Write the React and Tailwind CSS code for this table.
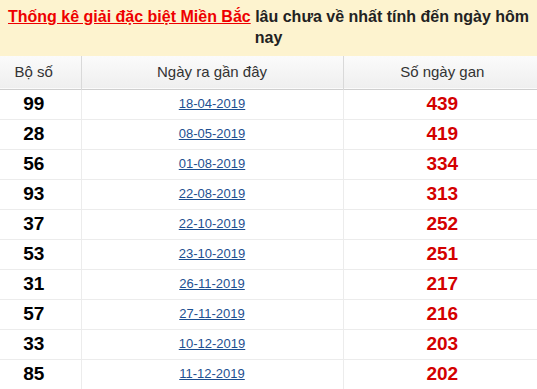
import React from "react";

const rows = [
  { so: "99", date: "18-04-2019", gan: "439" },
  { so: "28", date: "08-05-2019", gan: "419" },
  { so: "56", date: "01-08-2019", gan: "334" },
  { so: "93", date: "22-08-2019", gan: "313" },
  { so: "37", date: "22-10-2019", gan: "252" },
  { so: "53", date: "23-10-2019", gan: "251" },
  { so: "31", date: "26-11-2019", gan: "217" },
  { so: "57", date: "27-11-2019", gan: "216" },
  { so: "33", date: "10-12-2019", gan: "203" },
  { so: "85", date: "11-12-2019", gan: "202" },
];

const App = () => {
  return (
    <div className="w-[537px] bg-white font-['Liberation_Sans',Arial,sans-serif]">
      <h2 className="bg-[#fdf3cf] px-1 pt-[6px] pb-[8px] text-center text-[16px] font-bold leading-[21px] text-[#222]">
        <a href="#" className="text-[#e00] underline">
          Thống kê giải đặc biệt Miền Bắc
        </a>{" "}
        lâu chưa về nhất tính đến ngày hôm nay
      </h2>

      <table className="w-full table-fixed border-collapse">
        <colgroup>
          <col className="w-[81px]" />
          <col className="w-[262px]" />
          <col />
        </colgroup>
        <thead>
          <tr className="h-[33px] bg-gradient-to-b from-[#fbfbfb] to-[#efefef] border-b border-[#cfcfcf]">
            <th className="border-r border-[#d9d9d9] pr-[13px] text-[15px] font-normal text-[#333]">
              Bộ số
            </th>
            <th className="border-r border-[#d9d9d9] text-[15px] font-normal text-[#333]">
              Ngày ra gần đây
            </th>
            <th className="pl-[4px] text-[15px] font-normal text-[#333]">
              Số ngày gan
            </th>
          </tr>
        </thead>
        <tbody>
          {rows.map((r) => (
            <tr key={r.so} className="h-[30px] border-b border-[#ececec]">
              <td className="border-r border-[#ececec] pr-[13px] text-center text-[19px] font-bold text-black">
                {r.so}
              </td>
              <td className="border-r border-[#ececec] text-center text-[13px]">
                <a href="#" className="text-[#1d4f91] underline">
                  {r.date}
                </a>
              </td>
              <td className="pl-[4px] text-center text-[19px] font-bold text-[#d40000]">
                {r.gan}
              </td>
            </tr>
          ))}
        </tbody>
      </table>
    </div>
  );
};

export default App;
